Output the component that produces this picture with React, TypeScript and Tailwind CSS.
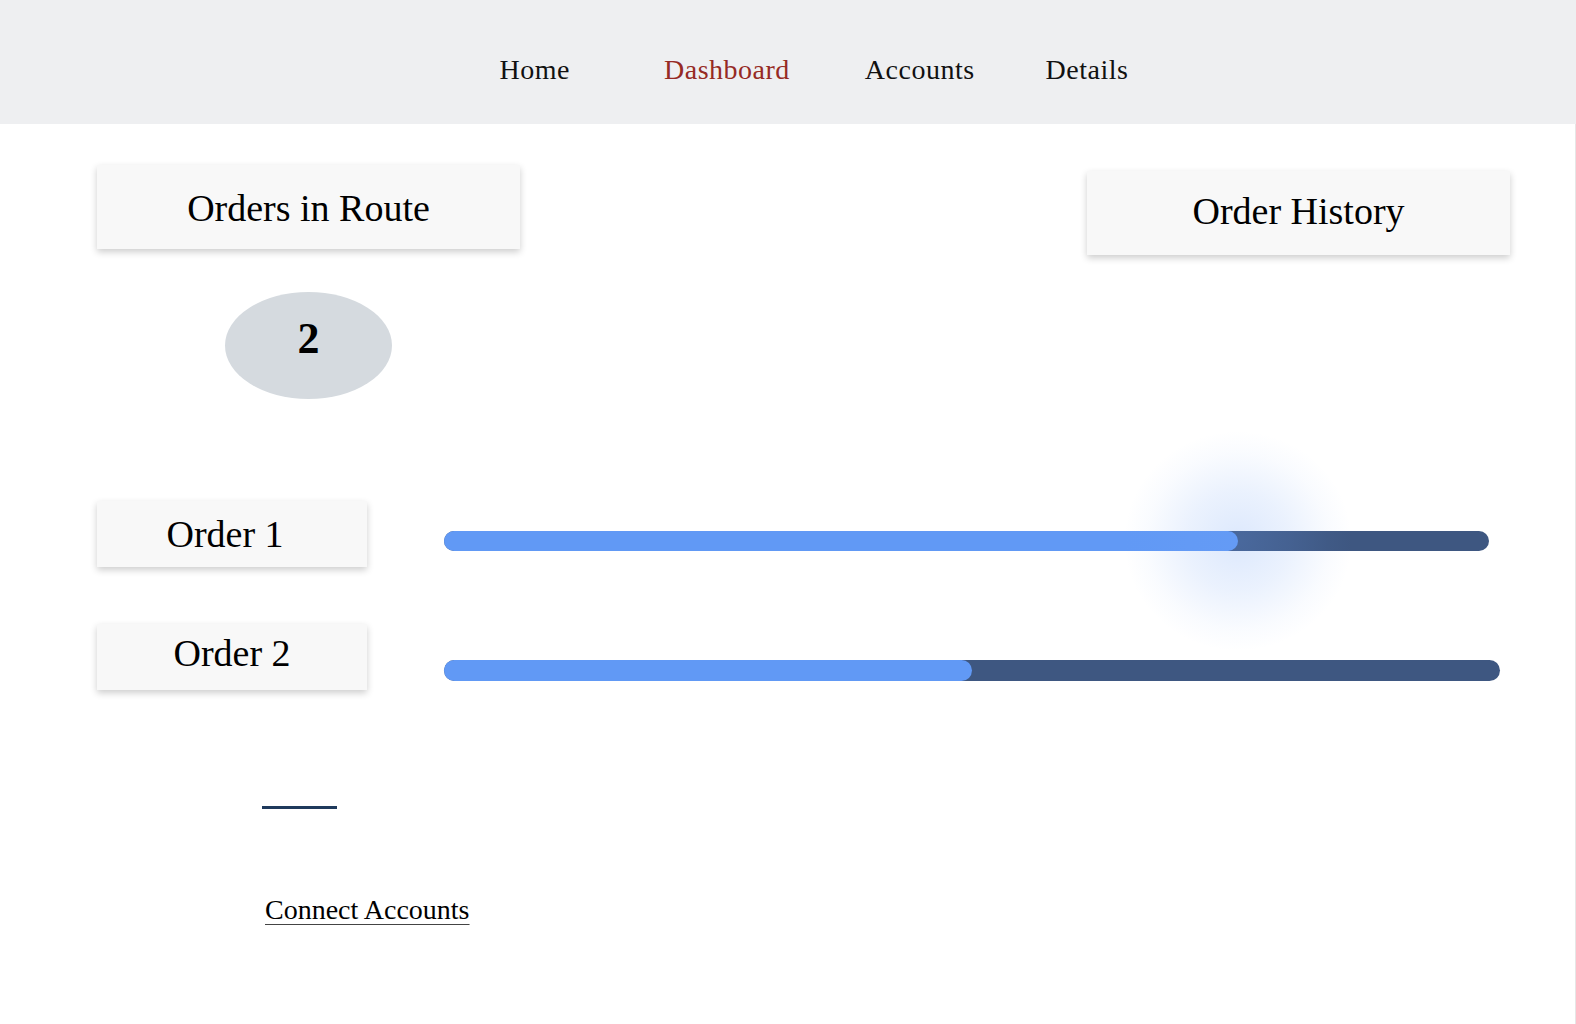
import React from "react";

const serif = { fontFamily: '"Liberation Serif", "Times New Roman", serif' };

const navItems = [
  { label: "Home", active: false, cls: "mr-[94px]" },
  { label: "Dashboard", active: true, cls: "mr-[75px]" },
  { label: "Accounts", active: false, cls: "mr-[71px]" },
  { label: "Details", active: false, cls: "" },
];

const Card = ({ label, className }: { label: string; className: string }) => (
  <div
    className={`flex items-center justify-center bg-[#f8f8f8] shadow-[0_3px_7px_rgba(0,0,0,0.2)] text-[38px] leading-none text-black ${className}`}
  >
    {label}
  </div>
);

const ProgressBar = ({
  fill,
  className,
  glow,
}: {
  fill: number;
  className: string;
  glow?: boolean;
}) => (
  <div className={`relative rounded-full bg-[#3e5781] ${className}`}>
    <div
      className="h-full rounded-full bg-[#6199f5]"
      style={{ width: `${fill}%` }}
    />
    {glow && (
      <div
        className="pointer-events-none absolute top-1/2 h-[220px] w-[228px] -translate-x-1/2 -translate-y-1/2 rounded-full bg-[radial-gradient(closest-side,rgba(110,160,245,0.24),rgba(110,160,245,0.14)_45%,rgba(110,160,245,0.04)_80%,rgba(110,160,245,0)_100%)]"
        style={{ left: `${fill}%` }}
      />
    )}
  </div>
);

export default function App() {
  return (
    <div className="min-h-screen w-[1576px] bg-white" style={serif}>
      <nav className="flex h-[124px] items-start justify-center bg-[#eeeff1] pl-[52px] pt-[56px]">
        {navItems.map((item) => (
          <a
            key={item.label}
            className={`text-[28px] leading-none tracking-[0.5px] ${item.cls} ${
              item.active ? "text-[#962a24]" : "text-[#111]"
            }`}
          >
            {item.label}
          </a>
        ))}
      </nav>

      <main className="flex min-h-[900px] flex-col border-r border-[#e6e6e6] pl-[97px] pr-[65px] pt-[41px]">
        <div className="flex items-start justify-between">
          <Card label="Orders in Route" className="h-[84px] w-[423px] pt-[2px]" />
          <Card label="Order History" className="mt-[6px] h-[84px] w-[423px] pb-[4px]" />
        </div>

        <div className="ml-[128px] mt-[37px] flex h-[107px] w-[167px] items-center justify-center rounded-[50%] bg-[#d5dadf] pb-[14px] text-[44px] font-bold leading-none text-black">
          2
        </div>

        <div className="mt-[102px] flex items-start">
          <Card label="Order 1" className="h-[66px] w-[270px] pr-[14px]" />
          <ProgressBar fill={76} glow className="ml-[77px] mt-[30px] h-[20px] w-[1045px]" />
        </div>

        <div className="mt-[57px] flex items-start">
          <Card label="Order 2" className="h-[66px] w-[270px] pb-[9px]" />
          <ProgressBar fill={50} className="ml-[77px] mt-[36px] h-[21px] w-[1056px]" />
        </div>

        <div className="ml-[165px] mt-[116px] h-[3px] w-[75px] bg-[#1f3a5c]" />

        <a className="ml-[168px] mt-[87px] w-fit text-[28px] leading-none text-black underline decoration-[#444] decoration-1 underline-offset-[5px]">
          Connect Accounts
        </a>
      </main>
    </div>
  );
}
